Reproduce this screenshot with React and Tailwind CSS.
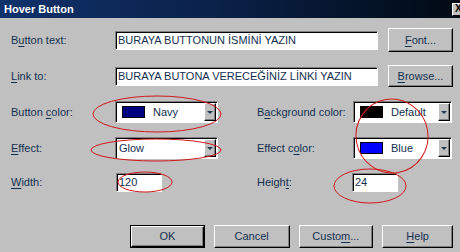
const sunken = 'bg-white border border-t-[#808080] border-l-[#808080] border-b-white border-r-white shadow-[inset_1px_1px_0_#000]'
const raised = 'bg-[#c0c0c0] border border-t-white border-l-white border-b-black border-r-black shadow-[inset_-1px_-1px_0_#808080]'

function U({ children }) {
  return <span className="underline underline-offset-[2px]">{children}</span>
}

function Btn({ children, w = 'w-[65px]', h = 'h-[24px]', def = false }) {
  const inner = (
    <div className={`${raised} ${def ? 'w-full h-full' : `${w} ${h}`} flex items-center justify-center text-[#143050]`}>
      {children}
    </div>
  )
  if (def) return <div className={`${w} ${h} border border-black`}>{inner}</div>
  return inner
}

function Combo({ w, swatch, label }) {
  return (
    <div className={`${sunken} ${w} h-[22px] flex items-center pl-[6px] pr-[1px]`}>
      {swatch && <div className={`w-[23px] h-[12px] ${swatch} border border-black shrink-0`} />}
      <span className={`${swatch ? 'ml-[8px]' : 'ml-[-3px]'} flex-1 text-[#143050]`}>{label}</span>
      <div className={`${raised} w-[12px] h-[18px] flex items-center justify-center`}>
        <div className="w-0 h-0 border-l-[3px] border-r-[3px] border-t-[3px] border-l-transparent border-r-transparent border-t-[#243850]" />
      </div>
    </div>
  )
}

export default function App() {
  return (
    <div className="relative w-[460px] h-[252px] overflow-hidden bg-[#c0c0c0] text-[11px] text-[#143050]"
      style={{ fontFamily: '"Liberation Sans", Arial, sans-serif' }}>
      <div className="h-[18px] flex items-center justify-between bg-gradient-to-r from-[#0f326c] via-[#0a2046] to-[#020a14] overflow-hidden">
        <span className="pl-[4px] font-bold text-white text-[11px]">Hover Button</span>
        <div className="w-[16px] h-[13px] mr-[-8px] bg-[#c0c0c0] border border-t-white border-l-white border-b-black border-r-black flex items-center pl-[2px] text-[10px] font-bold text-black leading-none">X</div>
      </div>

      <div className="pl-[11px] pr-[7px]">
        <div className="mt-[10px] h-[24px] flex items-center">
          <span className="w-[104px]">B<U>u</U>tton text:</span>
          <div className={`${sunken} w-[263px] h-[19px] flex items-center pl-[2px]`}>BURAYA BUTTONUN İSMİNİ YAZIN</div>
          <div className="ml-[10px]"><Btn><span><U>F</U>ont...</span></Btn></div>
        </div>

        <div className="mt-[13px] h-[22px] flex items-center">
          <span className="w-[104px]"><U>L</U>ink to:</span>
          <div className={`${sunken} w-[263px] h-[19px] flex items-center pl-[2px]`}>BURAYA BUTONA VERECEĞİNİZ LİNKİ YAZIN</div>
          <div className="ml-[10px]"><Btn h="h-[22px]"><span><U>B</U>rowse...</span></Btn></div>
        </div>

        <div className="mt-[14px] h-[22px] flex items-center">
          <span className="w-[104px]">Button <U>c</U>olor:</span>
          <Combo w="w-[103px]" swatch="bg-[#000080]" label="Navy" />
          <span className="ml-[39px] w-[96px]">B<U>a</U>ckground color:</span>
          <Combo w="w-[99px]" swatch="bg-black" label="Default" />
        </div>

        <div className="mt-[14px] h-[22px] flex items-center">
          <span className="w-[104px]"><U>E</U>ffect:</span>
          <Combo w="w-[103px]" label="Glow" />
          <span className="ml-[39px] w-[96px]">Effect c<U>o</U>lor:</span>
          <Combo w="w-[99px]" swatch="bg-[#0000ff]" label="Blue" />
        </div>

        <div className="mt-[14px] h-[19px] flex items-center">
          <span className="w-[105px]"><U>W</U>idth:</span>
          <div className={`${sunken} w-[46px] h-[19px] flex items-center pl-[2px]`}>120</div>
          <span className="ml-[95px] w-[95px]">Heigh<U>t</U>:</span>
          <div className={`${sunken} w-[46px] h-[19px] flex items-center pl-[2px]`}>24</div>
        </div>

        <div className="mt-[33px] flex items-center pl-[119px] gap-[9px]">
          <Btn w="w-[75px]" h="h-[23px]" def>OK</Btn>
          <Btn w="w-[76px]" h="h-[23px]">Cancel</Btn>
          <Btn w="w-[75px]" h="h-[23px]"><span>Custo<U>m</U>...</span></Btn>
          <Btn w="w-[71px]" h="h-[23px]"><span><U>H</U>elp</span></Btn>
        </div>
      </div>

      <svg className="absolute inset-0 pointer-events-none" width="460" height="252">
        <g fill="none" stroke="#d01818" strokeWidth="1">
          <ellipse cx="157" cy="114" rx="64" ry="18" />
          <ellipse cx="156" cy="150" rx="65" ry="11" />
          <ellipse cx="392" cy="136" rx="36" ry="37" transform="rotate(-10 392 136)" />
          <ellipse cx="145" cy="182" rx="27" ry="10" />
          <ellipse cx="370" cy="186" rx="36" ry="17" />
        </g>
      </svg>
    </div>
  )
}
